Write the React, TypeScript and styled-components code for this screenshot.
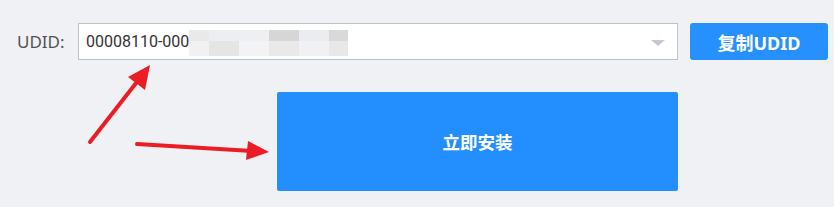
import styled, { createGlobalStyle } from "styled-components";

const GlobalStyle = createGlobalStyle`
  body {
    margin: 0;
    background: #eff1f5;
    font-family: "Noto Sans", "Noto Sans CJK SC", sans-serif;
  }
`;

const mosaic = [
  ["#e9e9ea", "#eceef1", "#eeeff2", "#d6d6d6", "#ebecef", "#d9d9d9"],
  ["#f1f1f4", "#e5e5e6", "#f3f3f5", "#e8e9e8", "#f1f1f3", "#e8e8ea"]
];

const App = () => {
  return (
    <Page>
      <GlobalStyle />
      <Row>
        <Label>UDID:</Label>
        <Select>
          <Value>00008110-000</Value>
          <Mosaic>
            {mosaic.flat().map((c, i) => (
              <Cell key={i} $color={c} />
            ))}
          </Mosaic>
          <Caret />
        </Select>
        <CopyButton>复制UDID</CopyButton>
      </Row>
      <InstallButton>立即安装</InstallButton>
      <Arrows width="834" height="207" viewBox="0 0 834 207">
        <g stroke="#ec1c24" strokeWidth="4" strokeLinecap="round" fill="none">
          <line x1="90" y1="142" x2="140" y2="78" />
          <line x1="137" y1="144" x2="252" y2="151" />
        </g>
        <g fill="#ec1c24">
          <polygon points="150,65 145,90 128,77" />
          <polygon points="269,152 246,160 248,141" />
        </g>
      </Arrows>
    </Page>
  );
};

const Page = styled.div`
  position: relative;
  width: 834px;
  height: 207px;
  padding-top: 23px;
  box-sizing: border-box;
`;

const Row = styled.div`
  display: flex;
  align-items: center;
  height: 37px;
`;

const Label = styled.span`
  width: 61px;
  padding-left: 17px;
  font-size: 17px;
  color: #505356;
`;

const Select = styled.div`
  position: relative;
  display: flex;
  align-items: center;
  width: 600px;
  height: 37px;
  box-sizing: border-box;
  border: 1px solid #b8c2cf;
  background: #fff;
  padding-left: 7px;
`;

const Value = styled.span`
  font-family: Roboto, "Noto Sans CJK SC", sans-serif;
  font-size: 16px;
  color: #333;
`;

const Mosaic = styled.div`
  display: grid;
  grid-template-columns: 20px 30px 30px 30px 30px 19px;
  grid-template-rows: 11px 15px;
  margin-top: 3px;
`;

const Cell = styled.div<{ $color: string }>`
  background: ${(p) => p.$color};
`;

const Caret = styled.div`
  position: absolute;
  right: 12px;
  top: 16px;
  width: 0;
  height: 0;
  border-left: 7px solid transparent;
  border-right: 7px solid transparent;
  border-top: 6px solid #c4c8d0;
`;

const CopyButton = styled.button`
  margin-left: 12px;
  width: 138px;
  height: 37px;
  border: none;
  border-radius: 3px;
  background: #2590fe;
  color: #fff;
  font-family: "Noto Sans", "Noto Sans CJK SC", sans-serif;
  font-size: 18px;
  font-weight: 700;
`;

const InstallButton = styled.button`
  display: block;
  margin: 32px 0 0 277px;
  width: 401px;
  height: 99px;
  border: none;
  border-radius: 2px;
  background: #238efd;
  color: #fff;
  font-family: "Noto Sans", "Noto Sans CJK SC", sans-serif;
  font-size: 17.5px;
  font-weight: 700;
`;

const Arrows = styled.svg`
  position: absolute;
  left: 0;
  top: 0;
  pointer-events: none;
`;

export default App;
